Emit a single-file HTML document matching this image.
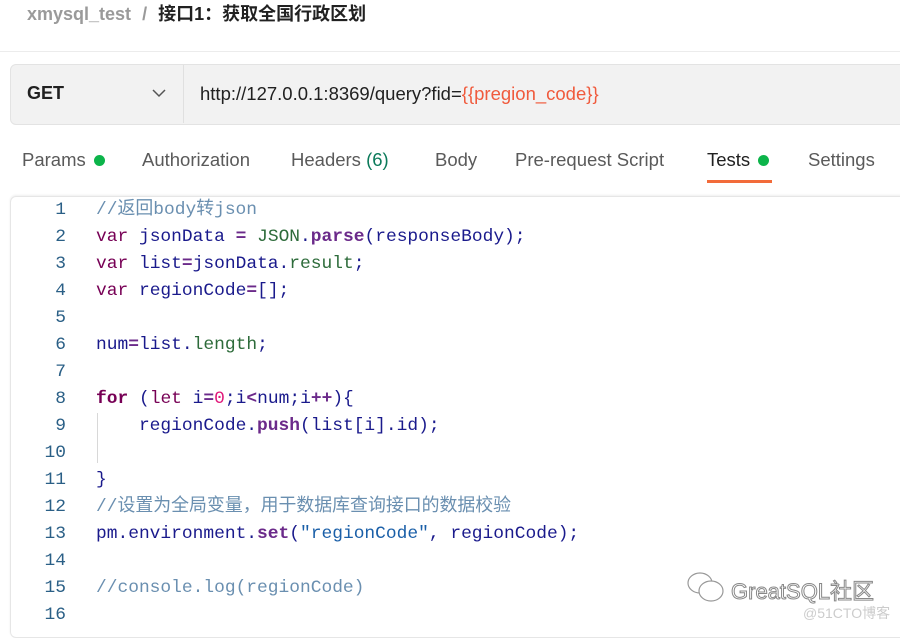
<!DOCTYPE html>
<html><head><meta charset="utf-8"><style>
body{margin:0;width:900px;height:628px;background:#fff;overflow:hidden;position:relative;font-family:"Liberation Sans","Noto Sans CJK SC",sans-serif}
.abs{position:absolute;white-space:nowrap}
.code{font-family:"Liberation Mono","Noto Sans CJK SC",monospace;font-size:17.9px;line-height:27px}
.ln{position:absolute;left:0;width:66px;height:27px;text-align:right;color:#2a5f86;font-family:"Liberation Mono",monospace;font-size:17.9px;line-height:27px}
.cl{position:absolute;left:96px;height:27px;line-height:27px;color:#1a1a8c;white-space:pre;overflow:visible}
.k{color:#770055}.b{color:#6b2a8a;font-weight:bold}.c{color:#6a8fb0}.s{color:#1a5fa8}.g{color:#2d6b3a}.z{color:#e0187a}.f{color:#770055;font-weight:bold}
.tab{position:absolute;top:149px;font-size:18.5px;color:#5a5a5a}
</style></head><body>
<div class="abs" style="left:27px;top:3px;font-size:18px;line-height:22px;color:#9a9a9a;font-weight:bold">xmysql_test <span style="margin-left:6px">/</span> <span style="color:#212121;margin-left:6px">接口1：获取全国行政区划</span></div>
<div class="abs" style="left:0;top:51px;width:900px;height:1px;background:#ececec"></div>
<div class="abs" style="left:10px;top:64px;width:900px;height:59px;background:#f2f2f2;border:1px solid #e3e3e3;border-radius:6px"></div>
<div class="abs" style="left:183px;top:65px;width:1px;height:58px;background:#e0e0e0"></div>
<div class="abs" style="left:27px;top:83px;font-size:18px;font-weight:bold;color:#212121">GET</div>
<svg class="abs" style="left:152px;top:89px" width="14" height="9"><path d="M1 1L7 7L13 1" fill="none" stroke="#555" stroke-width="1.5"/></svg>
<div class="abs" style="left:200px;top:83px;font-size:18.5px;color:#212121">http://127.0.0.1:8369/query?fid=<span style="color:#f05a3c">{{pregion_code}}</span></div>
<div class="tab" style="left:22px">Params <span style="display:inline-block;width:11px;height:11px;border-radius:50%;background:#0cb44a;margin-left:3px"></span></div>
<div class="tab" style="left:142px">Authorization</div>
<div class="tab" style="left:291px">Headers <span style="color:#0b7a5a">(6)</span></div>
<div class="tab" style="left:435px">Body</div>
<div class="tab" style="left:515px">Pre-request Script</div>
<div class="tab" style="left:707px;color:#212121">Tests <span style="display:inline-block;width:11px;height:11px;border-radius:50%;background:#0cb44a;margin-left:3px"></span></div>
<div class="tab" style="left:808px">Settings</div>
<div class="abs" style="left:707px;top:180px;width:65px;height:3px;background:#f26b3a"></div>
<div class="abs" style="left:10px;top:196px;width:900px;height:440px;border:1px solid #e6e6e6;border-radius:6px;box-shadow:0 -1px 2px #eee"></div>
<div class="abs" style="left:97px;top:413px;width:1px;height:50px;background:#d8d8d8"></div>
<div class="abs code" style="left:0;top:197px;width:900px;height:430px">
<div class="ln" style="top:0">1</div><div class="cl c" style="top:0">//返回body转json</div>
<div class="ln" style="top:27px">2</div><div class="cl" style="top:27px"><span class="k">var</span> jsonData <span class="b">=</span> <span class="g">JSON</span>.<span class="b">parse</span>(responseBody);</div>
<div class="ln" style="top:54px">3</div><div class="cl" style="top:54px"><span class="k">var</span> list<span class="b">=</span>jsonData.<span class="g">result</span>;</div>
<div class="ln" style="top:81px">4</div><div class="cl" style="top:81px"><span class="k">var</span> regionCode<span class="b">=</span>[];</div>
<div class="ln" style="top:108px">5</div>
<div class="ln" style="top:135px">6</div><div class="cl" style="top:135px">num<span class="b">=</span>list.<span class="g">length</span>;</div>
<div class="ln" style="top:162px">7</div>
<div class="ln" style="top:189px">8</div><div class="cl" style="top:189px"><span class="f">for</span> (<span class="k">let</span> i<span class="b">=</span><span class="z">0</span>;i<span class="b">&lt;</span>num;i<span class="b">++</span>){</div>
<div class="ln" style="top:216px">9</div><div class="cl" style="top:216px">    regionCode.<span class="b">push</span>(list[i].id);</div>
<div class="ln" style="top:243px">10</div>
<div class="ln" style="top:270px">11</div><div class="cl" style="top:270px">}</div>
<div class="ln" style="top:297px">12</div><div class="cl c" style="top:297px">//设置为全局变量，用于数据库查询接口的数据校验</div>
<div class="ln" style="top:324px">13</div><div class="cl" style="top:324px">pm.environment.<span class="b">set</span>(<span class="s">"regionCode"</span>, regionCode);</div>
<div class="ln" style="top:351px">14</div>
<div class="ln" style="top:378px">15</div><div class="cl c" style="top:378px">//console.log(regionCode)</div>
<div class="ln" style="top:405px">16</div>
</div>
<svg class="abs" style="left:686px;top:570px" width="40" height="34"><ellipse cx="14" cy="13" rx="12" ry="10" fill="#fff" stroke="#999" stroke-width="1.2"/><ellipse cx="25" cy="21" rx="12" ry="10" fill="#fff" stroke="#999" stroke-width="1.2"/></svg>
<div class="abs" style="left:731px;top:574px;font-size:22px;color:#fff;-webkit-text-stroke:1px #888">GreatSQL社区</div>
<div class="abs" style="left:803px;top:603px;font-size:14px;color:#ccc">@51CTO博客</div>
</body></html>
